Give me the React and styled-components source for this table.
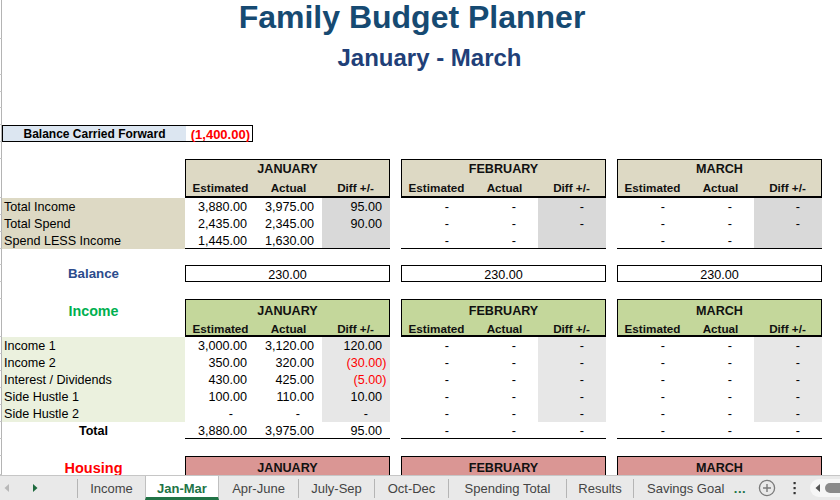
import React from 'react';
import styled, { createGlobalStyle } from 'styled-components';

const GlobalStyle = createGlobalStyle`
  * { box-sizing: border-box; }
  html, body { margin: 0; padding: 0; background: #fff; }
  body { font-family: "Liberation Sans", Arial, sans-serif; color: #000; }
`;

const Window = styled.div`
  width: 840px;
  height: 500px;
  display: flex;
  flex-direction: column;
  overflow: hidden;
  background: #fff;
`;

const Sheet = styled.div`
  flex: 1;
  min-height: 0;
  overflow: hidden;
  display: flex;
  flex-direction: column;
`;

const Row = styled.div`
  display: flex;
  flex: none;
  align-items: stretch;
  height: ${p => p.$h}px;
`;

const Stub = styled.div`
  flex: none;
  width: 2px;
  border-right: 1px solid #b4b4b4;
  border-bottom: 1px solid #c8c8c8;
`;

const Title = styled.div`
  width: 820px;
  text-align: center;
  font-size: 32px;
  font-weight: 700;
  line-height: 34px;
  color: #164a72;
  white-space: nowrap;
`;

const Subtitle = styled.div`
  width: 820px;
  padding-left: 35px;
  padding-top: 2px;
  text-align: center;
  font-size: 24px;
  font-weight: 700;
  line-height: 34px;
  color: #213f78;
  white-space: nowrap;
`;

const CarriedBox = styled.div`
  display: flex;
  width: 251px;
  border: 1px solid #000;
`;

const CarriedLabel = styled.div`
  width: 183px;
  background: #dce6f1;
  text-align: center;
  font-size: 12px;
  font-weight: 700;
  line-height: 15px;
  padding-top: 1px;
  white-space: nowrap;
`;

const CarriedValue = styled.div`
  flex: 1;
  text-align: right;
  padding-right: 2px;
  padding-top: 1px;
  font-size: 13px;
  font-weight: 700;
  line-height: 15px;
  color: #ff0000;
  white-space: nowrap;
`;

const LabelCell = styled.div`
  flex: none;
  width: 183px;
  background: ${p => p.$bg || 'transparent'};
  padding-left: ${p => (p.$center ? 0 : 2)}px;
  padding-top: ${p => p.$top ?? 1}px;
  text-align: ${p => (p.$center ? 'center' : 'left')};
  font-size: ${p => p.$size || 12.6}px;
  font-weight: ${p => (p.$bold ? 700 : 400)};
  color: ${p => p.$color || '#000'};
  line-height: ${p => p.$lh || 16}px;
  white-space: nowrap;
`;

const Months = styled.div`
  display: flex;
  gap: 11px;
  flex: none;
`;

const HeaderBox = styled.div`
  width: 205px;
  height: 100%;
  border: 1px solid #000;
  border-bottom: ${p => (p.$open ? '0' : '2px solid #000')};
  background: ${p => p.$bg};
  display: grid;
  grid-template-columns: 69px 67px 67px;
  grid-template-rows: ${p => p.$nameH}px 1fr;
  font-weight: 700;
  color: #111;
`;

const MonthName = styled.div`
  grid-column: 1 / -1;
  text-align: center;
  font-size: 12.6px;
  line-height: ${p => p.$h}px;
  padding-top: 1px;
`;

const SubHead = styled.div`
  display: flex;
  align-items: center;
  justify-content: center;
  padding-top: 1px;
  font-size: 11.7px;
  white-space: nowrap;
`;

const DataGroup = styled.div`
  width: 205px;
  display: grid;
  grid-template-columns: 70px 67px 68px;
  border-bottom: ${p => (p.$last ? '1px solid #000' : '0')};
`;

const pads = { pos: 8, neg: 3.5, dash: 22, empty: 0 };

const Cell = styled.div`
  display: flex;
  align-items: center;
  justify-content: flex-end;
  background: ${p => p.$bg || 'transparent'};
  padding-right: ${p => pads[p.$kind]}px;
  padding-top: 1px;
  font-size: 12.6px;
  color: ${p => (p.$kind === 'neg' ? '#ff0000' : '#000')};
  white-space: nowrap;
`;

const BalanceBox = styled.div`
  width: 205px;
  border: 1px solid #000;
  text-align: center;
  font-size: 12.6px;
  line-height: 15px;
  padding-top: 1.5px;
`;

/* ---------- tab bar ---------- */

const TabBar = styled.div`
  flex: none;
  height: 25px;
  display: flex;
  align-items: stretch;
  background: #e9e9e9;
  border-top: 1px solid #c6c6c6;
  font-family: "Liberation Sans", Arial, sans-serif;
  font-size: 13px;
  color: #444;
`;

const Nav = styled.div`
  width: 77px;
  flex: none;
  display: flex;
  align-items: center;
  padding-left: 4px;
  gap: 22px;
`;

const Sep = styled.div`
  flex: none;
  width: 1px;
  height: 19px;
  align-self: flex-end;
  margin-bottom: 2px;
  background: #b5b5b5;
`;

const Tab = styled.div`
  flex: none;
  width: ${p => p.$w}px;
  display: flex;
  align-items: center;
  justify-content: ${p => (p.$left ? 'flex-start' : 'center')};
  padding-left: ${p => (p.$left ? 13 : 0)}px;
  overflow: hidden;
  white-space: nowrap;
  background: ${p => (p.$active ? '#fff' : 'transparent')};
  border-left: ${p => (p.$active ? '1px solid #c0c0c0' : '0')};
  border-right: ${p => (p.$active ? '1px solid #c0c0c0' : '0')};
  border-bottom: ${p => (p.$active ? '3px solid #217346' : '0')};
  padding-top: ${p => (p.$active ? 3 : 0)}px;
  font-weight: ${p => (p.$active ? 700 : 400)};
  color: ${p => (p.$active ? '#217346' : '#444')};
`;

const More = styled.div`
  flex: none;
  width: 28px;
  display: flex;
  align-items: center;
  justify-content: center;
  color: #217346;
  font-weight: 700;
  font-size: 13px;
  letter-spacing: 0.5px;
`;

const IconSlot = styled.div`
  flex: none;
  width: ${p => p.$w}px;
  display: flex;
  align-items: center;
  justify-content: center;
`;

const Scroll = styled.div`
  flex: 1;
  display: flex;
  align-items: center;
  gap: 4px;
  align-self: center;
  height: 18px;
  padding-left: 5px;
  background: #f6f6f6;
  border-radius: 9px 0 0 9px;
`;

const Thumb = styled.div`
  width: 16px;
  height: 10px;
  border-radius: 5px 0 0 5px;
  background: #8a8a8a;
`;

/* ---------- data ---------- */

const MONTHS = ['JANUARY', 'FEBRUARY', 'MARCH'];

const summary = [
  { label: 'Total Income', jan: ['3,880.00', '3,975.00', '95.00'], other: ['-', '-', '-'] },
  { label: 'Total Spend', jan: ['2,435.00', '2,345.00', '90.00'], other: ['-', '-', '-'] },
  { label: 'Spend LESS Income', jan: ['1,445.00', '1,630.00', ''], other: ['-', '-', ''] },
];

const income = [
  { label: 'Income 1', jan: ['3,000.00', '3,120.00', '120.00'] },
  { label: 'Income 2', jan: ['350.00', '320.00', '(30.00)'] },
  { label: 'Interest / Dividends', jan: ['430.00', '425.00', '(5.00)'] },
  { label: 'Side Hustle 1', jan: ['100.00', '110.00', '10.00'] },
  { label: 'Side Hustle 2', jan: ['-', '-', '-'] },
];

const kindOf = v => (v === '' ? 'empty' : v === '-' ? 'dash' : v.startsWith('(') ? 'neg' : 'pos');

function Values({ values, diffBg, last }) {
  return (
    <DataGroup $last={last}>
      {values.map((v, i) => (
        <Cell key={i} $kind={kindOf(v)} $bg={i === 2 ? diffBg : undefined}>
          {v}
        </Cell>
      ))}
    </DataGroup>
  );
}

function HeaderRow({ bg, h, nameH, label, labelColor, labelSize, open }) {
  return (
    <Row $h={h}>
      <Stub />
      <LabelCell $center $bold $color={labelColor} $size={labelSize} $lh={21} $top={2}>
        {label}
      </LabelCell>
      <Months>
        {MONTHS.map(m => (
          <HeaderBox key={m} $bg={bg} $nameH={nameH} $open={open}>
            <MonthName $h={nameH - 1}>{m}</MonthName>
            {!open && (
              <>
                <SubHead>Estimated</SubHead>
                <SubHead>Actual</SubHead>
                <SubHead>Diff +/-</SubHead>
              </>
            )}
          </HeaderBox>
        ))}
      </Months>
    </Row>
  );
}

const Empty = ({ h = 17 }) => (
  <Row $h={h}>
    <Stub />
  </Row>
);

const PlusIcon = () => (
  <svg width="18" height="18" viewBox="0 0 18 18">
    <circle cx="9" cy="9" r="7.6" fill="none" stroke="#7a7a7a" strokeWidth="1.3" />
    <path d="M9 5v8M5 9h8" stroke="#7a7a7a" strokeWidth="1.4" />
  </svg>
);

const KebabIcon = () => (
  <svg width="4" height="14" viewBox="0 0 4 14">
    <rect x="0.5" y="1" width="2.2" height="2.2" fill="#333" />
    <rect x="0.5" y="6" width="2.2" height="2.2" fill="#333" />
    <rect x="0.5" y="11" width="2.2" height="2.2" fill="#333" />
  </svg>
);

const Arrow = ({ dir, color }) => (
  <svg width="6" height="8" viewBox="0 0 6 8">
    <path d={dir === 'left' ? 'M5 0L0.5 4L5 8Z' : 'M1 0L5.5 4L1 8Z'} fill={color} />
  </svg>
);

export default function App() {
  return (
    <Window>
      <GlobalStyle />
      <Sheet>
        <Row $h={39}>
          <Stub />
          <Title>Family Budget Planner</Title>
        </Row>
        <Row $h={36}>
          <Stub />
          <Subtitle>January - March</Subtitle>
        </Row>
        <Empty />
        <Empty h={16} />
        <Empty />
        <Row $h={17}>
          <Stub />
          <CarriedBox>
            <CarriedLabel>Balance Carried Forward</CarriedLabel>
            <CarriedValue>(1,400.00)</CarriedValue>
          </CarriedBox>
        </Row>
        <Empty />

        <HeaderRow bg="#ddd9c4" h={39} nameH={18} />
        {summary.map((r, idx) => (
          <Row $h={17} key={r.label}>
            <Stub />
            <LabelCell $bg="#ddd9c4">{r.label}</LabelCell>
            <Months>
              <Values values={r.jan} diffBg="#d9d9d9" last={idx === summary.length - 1} />
              <Values values={r.other} diffBg="#d9d9d9" last={idx === summary.length - 1} />
              <Values values={r.other} diffBg="#d9d9d9" last={idx === summary.length - 1} />
            </Months>
          </Row>
        ))}
        <Empty h={16} />
        <Row $h={17}>
          <Stub />
          <LabelCell $center $bold $size={13.3} $color="#2c4c8c">
            Balance
          </LabelCell>
          <Months>
            {MONTHS.map(m => (
              <BalanceBox key={m}>230.00</BalanceBox>
            ))}
          </Months>
        </Row>
        <Empty />

        <HeaderRow bg="#c4d79b" h={38} nameH={21} label="Income" labelColor="#00b050" labelSize={14.3} />
        {income.map(r => (
          <Row $h={17} key={r.label}>
            <Stub />
            <LabelCell $bg="#ebf1de">{r.label}</LabelCell>
            <Months>
              <Values values={r.jan} diffBg="#e7e7e7" />
              <Values values={['-', '-', '-']} diffBg="#e7e7e7" />
              <Values values={['-', '-', '-']} diffBg="#e7e7e7" />
            </Months>
          </Row>
        ))}
        <Row $h={17}>
          <Stub />
          <LabelCell $center $bold>
            Total
          </LabelCell>
          <Months>
            <Values values={['3,880.00', '3,975.00', '95.00']} last />
            <Values values={['-', '-', '-']} last />
            <Values values={['-', '-', '-']} last />
          </Months>
        </Row>
        <Empty />

        <HeaderRow bg="#da9694" h={19} nameH={21} open label="Housing" labelColor="#ff0000" labelSize={14.5} />
      </Sheet>

      <TabBar>
        <Nav>
          <Arrow dir="left" color="#b8b8b8" />
          <Arrow dir="right" color="#1e6a3e" />
        </Nav>
        <Sep />
        <Tab $w={67}>Income</Tab>
        <Tab $w={74} $active>Jan-Mar</Tab>
        <Tab $w={79}>Apr-June</Tab>
        <Sep />
        <Tab $w={75}>July-Sep</Tab>
        <Sep />
        <Tab $w={73}>Oct-Dec</Tab>
        <Sep />
        <Tab $w={117}>Spending Total</Tab>
        <Sep />
        <Tab $w={66}>Results</Tab>
        <Sep />
        <Tab $w={92} $left>Savings Goal</Tab>
        <More>...</More>
        <IconSlot $w={26}>
          <PlusIcon />
        </IconSlot>
        <IconSlot $w={30}>
          <KebabIcon />
        </IconSlot>
        <Scroll>
          <Arrow dir="left" color="#555" />
          <Thumb />
        </Scroll>
      </TabBar>
    </Window>
  );
}
